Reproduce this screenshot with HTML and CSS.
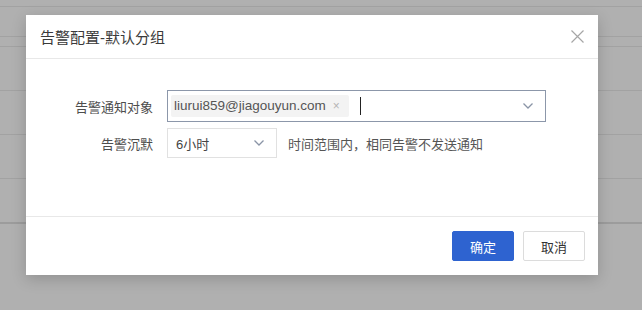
FILE: index.html
```html
<!DOCTYPE html>
<html lang="zh-CN">
<head>
    <meta charset="UTF-8">
    <meta name="viewport" content="width=device-width, initial-scale=1.0">
    <title>告警配置</title>
    <link rel="stylesheet" href="styles.css">
</head>
<body>
    <div class="backdrop">
        <div class="row row-a"></div>
        <div class="row row-b"></div>
        <div class="row row-c"></div>
        <div class="row"></div>
        <div class="row"></div>
        <div class="row"></div>
        <div class="row row-last"></div>
    </div>

    <div class="modal">
        <div class="modal-header">
            <span class="modal-title">告警配置-默认分组</span>
            <svg class="close" width="13" height="13" viewBox="0 0 13 13">
                <path d="M0.5 0.5 L12.5 12.5 M12.5 0.5 L0.5 12.5" stroke="#a6a6a6" stroke-width="1.2" fill="none"/>
            </svg>
        </div>
        <div class="modal-body">
            <div class="form-row">
                <label class="form-label">告警通知对象</label>
                <div class="multi-select">
                    <span class="tag">liurui859@jiagouyun.com<span class="tag-close">×</span></span>
                    <span class="cursor"></span>
                    <svg class="arrow" width="10" height="6" viewBox="0 0 10 6">
                        <path d="M0.5 0.5 L5 5 L9.5 0.5" stroke="#8a94a6" stroke-width="1.3" fill="none"/>
                    </svg>
                </div>
            </div>
            <div class="form-row">
                <label class="form-label">告警沉默</label>
                <div class="select">
                    <span>6小时</span>
                    <svg class="arrow" width="10" height="6" viewBox="0 0 10 6">
                        <path d="M0.5 0.5 L5 5 L9.5 0.5" stroke="#8a94a6" stroke-width="1.3" fill="none"/>
                    </svg>
                </div>
                <span class="hint">时间范围内，相同告警不发送通知</span>
            </div>
        </div>
        <div class="modal-footer">
            <button class="btn btn-primary">确定</button>
            <button class="btn">取消</button>
        </div>
    </div>
</body>
</html>
```

FILE: styles.css
```css
body {
    margin: 0;
    background-color: #b0b0b0;
    font-family: "Liberation Sans", "Noto Sans CJK SC", sans-serif;
    font-size: 13px;
    color: #333;
}
.backdrop {
    height: 310px;
    overflow: hidden;
}
.row {
    height: 43px;
    border-bottom: 1px solid #a2a2a2;
}
.row-a {
    height: 6px;
}
.row-b {
    height: 29px;
}
.row-c {
    height: 9px;
}
.row-last {
    border-bottom: 2px solid #9c9c9c;
}
.modal {
    position: absolute;
    left: 26px;
    top: 15px;
    width: 572px;
    height: 260px;
    background: #ffffff;
    box-shadow: 0 4px 14px rgba(0, 0, 0, 0.18);
    display: flex;
    flex-direction: column;
}
.modal-header {
    height: 43px;
    border-bottom: 1px solid #e8e8e8;
    display: flex;
    align-items: center;
    justify-content: space-between;
    padding: 0 14px;
}
.modal-title {
    font-size: 15px;
    color: #3a3a3a;
}
.modal-body {
    flex: 1;
    padding-top: 31px;
}
.form-row {
    display: flex;
    align-items: center;
    margin-bottom: 6px;
}
.form-label {
    width: 141px;
    padding-right: 14px;
    box-sizing: border-box;
    text-align: right;
    color: #4d4d4d;
}
.multi-select {
    width: 379px;
    height: 32px;
    box-sizing: border-box;
    border: 1px solid #8c97aa;
    display: flex;
    align-items: center;
    padding-left: 3px;
    padding-right: 12px;
}
.tag {
    height: 22px;
    line-height: 22px;
    background: #f3f3f3;
    border-radius: 2px;
    padding: 0 9px 0 3px;
    color: #555;
    font-size: 13.5px;
}
.tag-close {
    margin-left: 7px;
    color: #b5b5b5;
    font-size: 12px;
}
.cursor {
    width: 1px;
    height: 18px;
    background: #222;
    margin-left: 11px;
}
.multi-select .arrow {
    margin-left: auto;
}
.select {
    width: 110px;
    height: 30px;
    box-sizing: border-box;
    border: 1px solid #e1e1e1;
    display: flex;
    align-items: center;
    justify-content: space-between;
    padding: 0 12px 0 8px;
    color: #444;
}
.hint {
    margin-left: 11px;
    color: #555;
}
.modal-footer {
    border-top: 1px solid #e8e8e8;
    display: flex;
    justify-content: flex-end;
    gap: 9px;
    padding: 14px 13px 14px 0;
}
.btn {
    width: 62px;
    height: 30px;
    font-family: inherit;
    font-size: 13px;
    background: #ffffff;
    color: #333;
    border: 1px solid #dcdcdc;
    border-radius: 2px;
    cursor: pointer;
}
.btn-primary {
    background-color: #2e63d0;
    border-color: #2e63d0;
    color: white;
}
```
